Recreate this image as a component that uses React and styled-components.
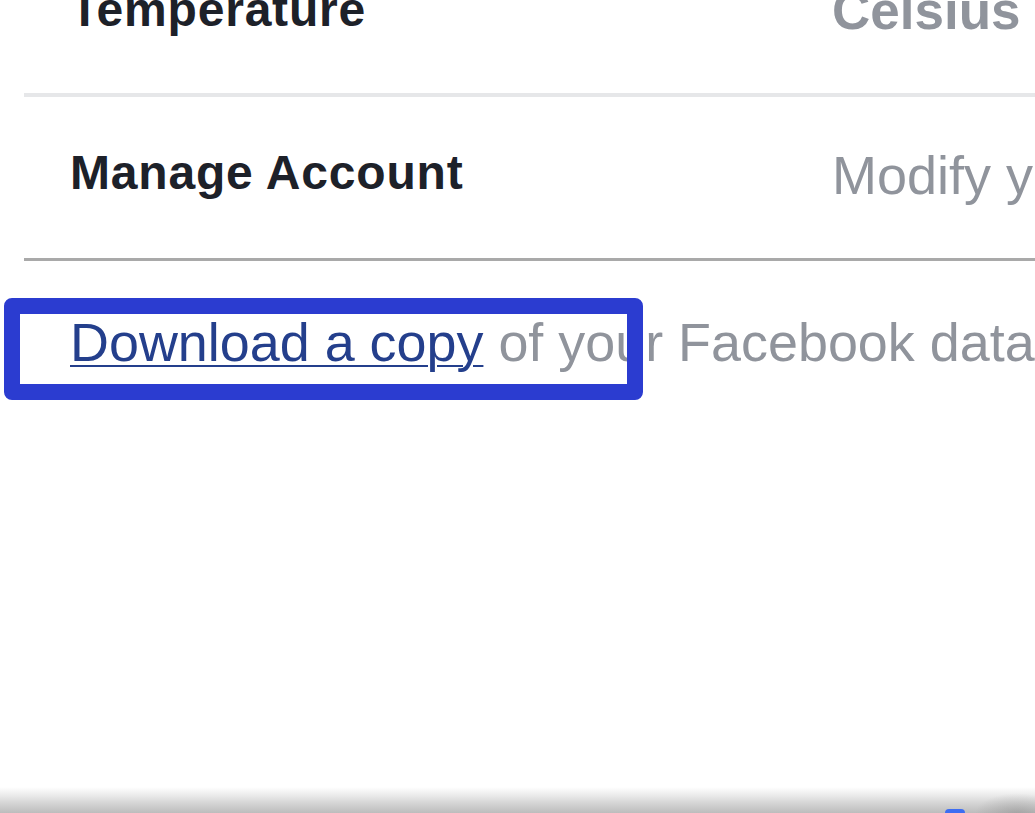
import React from 'react';
import styled, { createGlobalStyle } from 'styled-components';

const GlobalStyle = createGlobalStyle`
  html, body {
    margin: 0;
    padding: 0;
    background: #ffffff;
    overflow: hidden;
  }
  body {
    font-family: 'Liberation Sans', Arial, sans-serif;
  }
`;

const Page = styled.div`
  display: flex;
  flex-direction: column;
  height: 100vh;
  overflow: hidden;
  background: #ffffff;
`;

const SettingsTable = styled.div`
  display: flex;
  flex-direction: column;
  margin-top: -66px;
  margin-left: 24px;
`;

const Row = styled.div`
  box-sizing: border-box;
  display: flex;
  align-items: flex-start;
  height: ${(p) => p.$height}px;
  padding: 52px 0 0 46px;
  border-bottom: ${(p) => p.$borderWidth}px solid ${(p) => p.$borderColor};
`;

const Label = styled.div`
  flex: 0 0 762px;
  font-size: 48px;
  line-height: 1;
  font-weight: 700;
  letter-spacing: 0.8px;
  color: #1d2129;
  white-space: nowrap;
`;

const Value = styled.div`
  margin-top: ${(p) => p.$shift}px;
  font-size: ${(p) => (p.$bold ? 53 : 54)}px;
  line-height: 1;
  font-weight: ${(p) => (p.$bold ? 700 : 400)};
  color: #90949c;
  white-space: nowrap;
`;

const DownloadLine = styled.div`
  position: relative;
  margin-top: 55px;
  padding-left: 70px;
  font-size: 53.9px;
  line-height: 1;
  color: #90949c;
  white-space: nowrap;
`;

const DataLink = styled.a`
  color: #243f8c;
  text-decoration: underline;
  text-decoration-thickness: 2px;
  text-underline-offset: 4px;
  cursor: pointer;
`;

const Highlight = styled.div`
  position: absolute;
  left: 4px;
  top: -18px;
  box-sizing: border-box;
  width: 639px;
  height: 102px;
  border: 16px solid #2b3cd0;
  border-radius: 8px;
  pointer-events: none;
`;

const BottomBar = styled.div`
  position: relative;
  margin-top: auto;
  height: 26px;
  background: linear-gradient(
    to bottom,
    #ffffff 0%,
    #ececec 30%,
    #d6d6d6 60%,
    #bcbcbc 100%
  );
`;

const Shade = styled.div`
  position: absolute;
  right: 0;
  bottom: 0;
  width: 60px;
  height: 20px;
  background: radial-gradient(ellipse at 70% 100%, rgba(120, 120, 120, 0.35), rgba(120, 120, 120, 0) 70%);
`;

const BluePill = styled.div`
  position: absolute;
  left: 945px;
  bottom: -4px;
  width: 20px;
  height: 8px;
  border-radius: 4px;
  background: #3d6df2;
`;

const rows = [
  { label: 'Temperature', value: 'Celsius', bold: true, shift: -2, height: 163, borderWidth: 4, borderColor: '#e6e7e9' },
  { label: 'Manage Account', value: 'Modify your Facebook account', bold: false, shift: -1, height: 164, borderWidth: 3, borderColor: '#a9a9a9' },
];

export default function App() {
  return (
    <Page>
      <GlobalStyle />
      <SettingsTable>
        {rows.map((r) => (
          <Row key={r.label} $height={r.height} $borderWidth={r.borderWidth} $borderColor={r.borderColor}>
            <Label>{r.label}</Label>
            <Value $bold={r.bold} $shift={r.shift}>{r.value}</Value>
          </Row>
        ))}
      </SettingsTable>
      <DownloadLine>
        <DataLink>Download a copy</DataLink> of your Facebook data.
        <Highlight />
      </DownloadLine>
      <BottomBar>
        <BluePill />
        <Shade />
      </BottomBar>
    </Page>
  );
}
